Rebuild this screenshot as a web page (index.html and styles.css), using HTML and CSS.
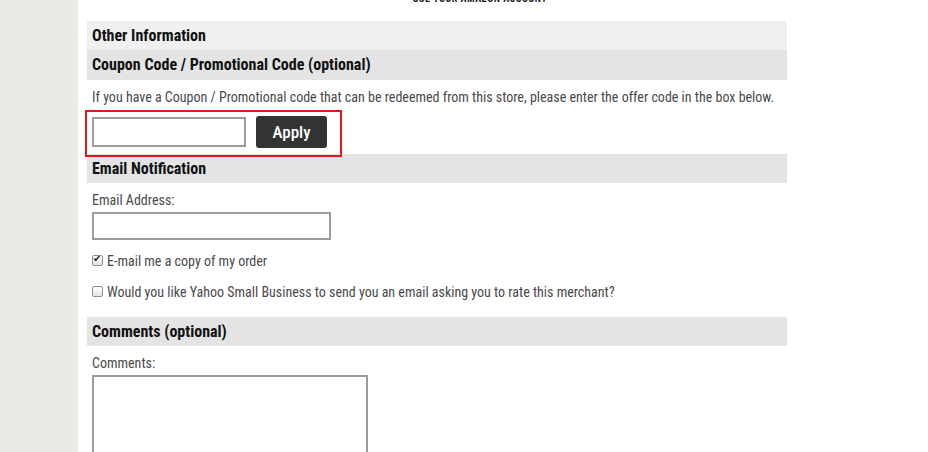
FILE: index.html
```html
<!DOCTYPE html>
<html lang="en">
<head>
    <meta charset="UTF-8">
    <meta name="viewport" content="width=device-width, initial-scale=1.0">
    <title>Checkout - Other Information</title>
    <link rel="stylesheet" href="styles.css">
</head>
<body>
    <div class="page">
        <aside class="sidebar"></aside>

        <main class="content">
            <div class="amazon-note">USE YOUR AMAZON ACCOUNT</div>

            <section class="info">
                <h2 class="bar bar-light">Other Information</h2>

                <h3 class="bar bar-tall">Coupon Code / Promotional Code (optional)</h3>
                <div class="coupon">
                    <p class="hint">If you have a Coupon / Promotional code that can be redeemed from this store, please enter the offer code in the box below.</p>
                    <form class="coupon-row">
                        <input type="text" class="field coupon-field" name="coupon">
                        <button type="button" class="apply">Apply</button>
                    </form>
                    <div class="highlight"></div>
                </div>

                <h3 class="bar">Email Notification</h3>
                <div class="block">
                    <label for="email" class="label">Email Address:</label>
                    <input type="text" id="email" class="field email-field">

                    <label class="check">
                        <input type="checkbox" checked>
                        E-mail me a copy of my order
                    </label>
                    <label class="check">
                        <input type="checkbox">
                        Would you like Yahoo Small Business to send you an email asking you to rate this merchant?
                    </label>
                </div>

                <h3 class="bar">Comments (optional)</h3>
                <div class="block">
                    <label for="comments" class="label">Comments:</label>
                    <textarea id="comments" class="field comments-field"></textarea>
                </div>
            </section>
        </main>
    </div>
</body>
</html>
```

FILE: styles.css
```css
body {
    margin: 0;
    background: #ffffff;
    font-family: "Roboto Condensed", "Liberation Sans Narrow", "DejaVu Sans Condensed", sans-serif;
    font-size: 14px;
    color: #4a4a4a;
}
.page {
    display: flex;
    height: 452px;
    overflow: hidden;
}
.sidebar {
    width: 78px;
    flex-shrink: 0;
    background-color: #e9eae3;
}
.content {
    padding-left: 9px;
    width: 700px;
}
.amazon-note {
    margin-top: -7px;
    height: 28px;
    line-height: 12px;
    text-align: center;
    font-size: 10px;
    font-weight: bold;
    letter-spacing: 0.5px;
    color: #222;
    padding-left: 86px;
}
.info {
    width: 700px;
}
.bar {
    margin: 0;
    height: 29px;
    line-height: 29px;
    padding-left: 5px;
    background-color: #e4e4e4;
    color: #111;
    font-size: 16px;
    font-weight: bold;
}
.bar-light {
    background-color: #f0f0f0;
}
.bar-tall {
    height: 30px;
}
.coupon {
    position: relative;
    padding: 8px 5px 6px;
}
.hint {
    margin: 0 0 10px;
    line-height: 18px;
}
.coupon-row {
    display: flex;
    align-items: center;
    gap: 10px;
}
.field {
    box-sizing: border-box;
    border: 2px solid #9c9c9c;
    background: #fff;
    margin: 0;
    font-family: inherit;
}
.coupon-field {
    width: 154px;
    height: 30px;
}
.apply {
    width: 71px;
    height: 32px;
    border: none;
    border-radius: 3px;
    background-color: #333333;
    color: #fff;
    font-family: inherit;
    font-size: 17px;
    font-weight: 500;
    cursor: pointer;
}
.highlight {
    position: absolute;
    left: -2px;
    top: 30px;
    width: 253px;
    height: 43px;
    border: 2px solid #e3161e;
}
.block {
    padding: 8px 5px 10px;
}
.label {
    display: block;
    line-height: 18px;
    margin-bottom: 3px;
}
.comments-label {
    margin-bottom: 2px;
}
.email-field {
    display: block;
    width: 239px;
    height: 28px;
    margin-bottom: 5px;
}
.check {
    display: flex;
    align-items: center;
    gap: 4px;
    height: 31px;
}
.check input {
    appearance: none;
    -webkit-appearance: none;
    margin: 0;
    width: 11px;
    height: 11px;
    border: 1px solid #8f8f8f;
    border-radius: 2px;
    background: linear-gradient(#fdfdfd, #e6e6e6);
    position: relative;
}
.check input:checked::after {
    content: "\2714";
    position: absolute;
    left: 0;
    top: -3px;
    font-size: 10px;
    color: #222;
}
.comments-field {
    display: block;
    width: 276px;
    height: 90px;
    resize: both;
}
```
